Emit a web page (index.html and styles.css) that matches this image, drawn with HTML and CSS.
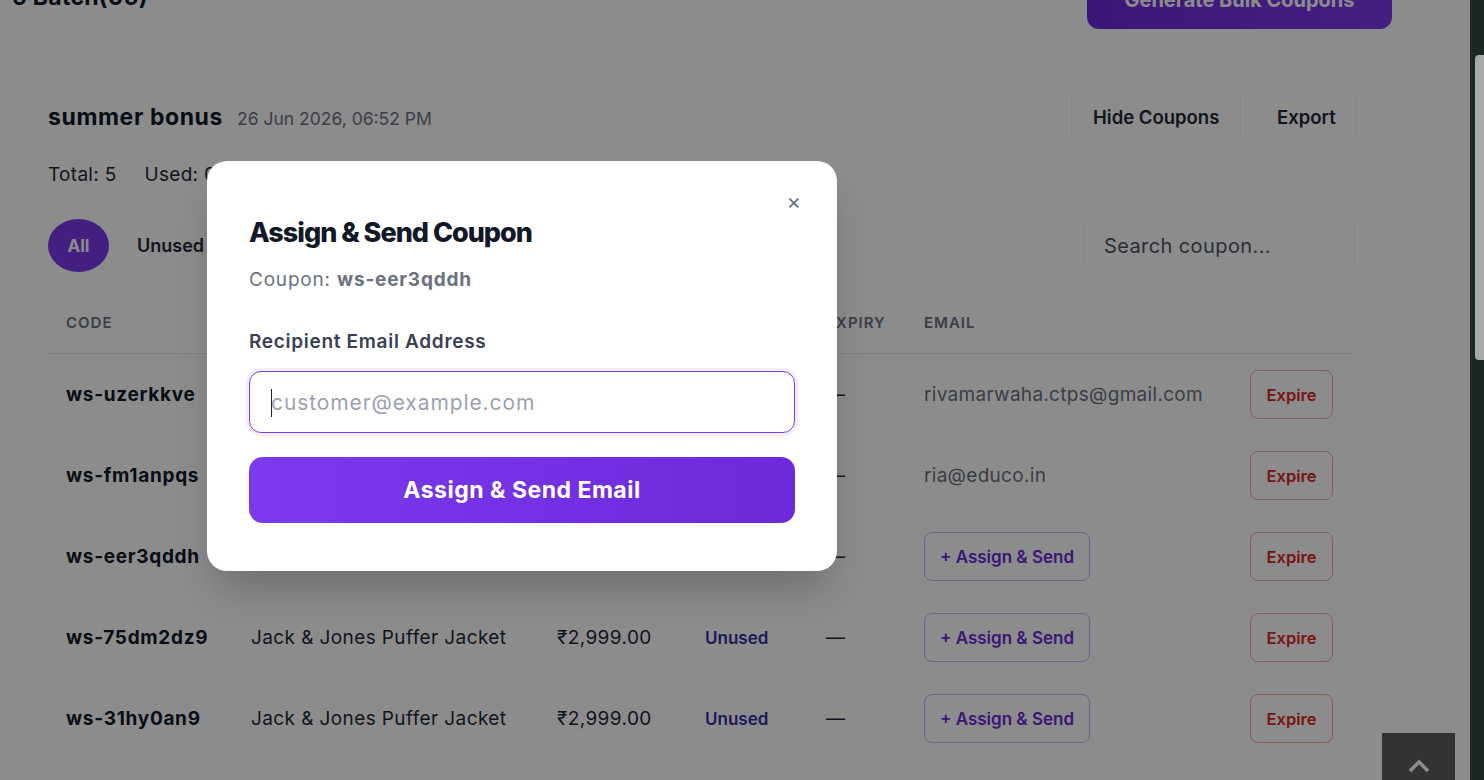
FILE: index.html
```html
<!DOCTYPE html>
<html lang="en">
<head>
  <meta charset="UTF-8">
  <meta name="viewport" content="width=device-width, initial-scale=1.0">
  <title>Coupon Batches</title>
  <link rel="stylesheet" href="styles.css">
</head>
<body>
<div class="page">
  <div class="page-head">
    <h1>5 Batch(05)</h1>
    <button class="btn-generate">Generate Bulk Coupons</button>
  </div>

  <div class="batch">
    <div class="batch-head">
      <div class="batch-title">
        <h2>summer bonus</h2>
        <span class="batch-date">26 Jun 2026, 06:52 PM</span>
      </div>
      <div class="batch-actions">
        <button class="btn-plain btn-hide">Hide Coupons</button>
        <button class="btn-plain btn-export">Export</button>
      </div>
    </div>

    <div class="stats">
      <span>Total: 5</span>
      <span>Used: 0</span>
      <span>Unused: 5</span>
      <span>Expired: 0</span>
    </div>

    <div class="filters">
      <div class="tabs">
        <button class="tab active">All</button>
        <button class="tab">Unused</button>
        <button class="tab">Used</button>
        <button class="tab">Expired</button>
      </div>
      <input class="search" type="text" placeholder="Search coupon...">
    </div>

    <table class="coupons">
      <colgroup>
        <col style="width:185px"><col style="width:306px"><col style="width:148px">
        <col style="width:121px"><col style="width:98px"><col style="width:326px"><col style="width:120px">
      </colgroup>
      <thead>
        <tr>
          <th>Code</th>
          <th>Product</th>
          <th>Value</th>
          <th>Status</th>
          <th>Expiry</th>
          <th>Email</th>
          <th></th>
        </tr>
      </thead>
      <tbody>
        <tr>
          <td class="code">ws-uzerkkve</td>
          <td>Jack &amp; Jones Puffer Jacket</td>
          <td>₹2,999.00</td>
          <td><span class="status">Unused</span></td>
          <td>—</td>
          <td class="email">rivamarwaha.ctps@gmail.com</td>
          <td><button class="btn-expire">Expire</button></td>
        </tr>
        <tr>
          <td class="code">ws-fm1anpqs</td>
          <td>Jack &amp; Jones Puffer Jacket</td>
          <td>₹2,999.00</td>
          <td><span class="status">Unused</span></td>
          <td>—</td>
          <td class="email">ria@educo.in</td>
          <td><button class="btn-expire">Expire</button></td>
        </tr>
        <tr>
          <td class="code">ws-eer3qddh</td>
          <td>Jack &amp; Jones Puffer Jacket</td>
          <td>₹2,999.00</td>
          <td><span class="status">Unused</span></td>
          <td>—</td>
          <td><button class="btn-assign">+ Assign &amp; Send</button></td>
          <td><button class="btn-expire">Expire</button></td>
        </tr>
        <tr>
          <td class="code">ws-75dm2dz9</td>
          <td>Jack &amp; Jones Puffer Jacket</td>
          <td>₹2,999.00</td>
          <td><span class="status">Unused</span></td>
          <td>—</td>
          <td><button class="btn-assign">+ Assign &amp; Send</button></td>
          <td><button class="btn-expire">Expire</button></td>
        </tr>
        <tr>
          <td class="code">ws-31hy0an9</td>
          <td>Jack &amp; Jones Puffer Jacket</td>
          <td>₹2,999.00</td>
          <td><span class="status">Unused</span></td>
          <td>—</td>
          <td><button class="btn-assign">+ Assign &amp; Send</button></td>
          <td><button class="btn-expire">Expire</button></td>
        </tr>
      </tbody>
    </table>
  </div>

  <button class="to-top" aria-label="Back to top">
    <svg width="24" height="14" viewBox="0 0 24 14"><path d="M3 12 L12 3 L21 12" fill="none" stroke="#fff" stroke-width="3.5"/></svg>
  </button>

  <div class="backdrop">
    <div class="modal">
      <button class="modal-close" aria-label="Close">×</button>
      <h3>Assign &amp; Send Coupon</h3>
      <p class="modal-coupon">Coupon: <b>ws-eer3qddh</b></p>
      <label class="modal-label" for="recipient">Recipient Email Address</label>
      <div class="modal-input">
        <span class="caret"></span>
        <input id="recipient" type="email" placeholder="customer@example.com">
      </div>
      <button class="btn-send">Assign &amp; Send Email</button>
    </div>
  </div>
</div>
<div class="scrollbar"><div class="thumb"></div></div>
</body>
</html>
```

FILE: styles.css
```css
body {
  font-family: Inter, "DejaVu Sans", sans-serif;
  margin: 0;
  padding: 0;
  display: flex;
  height: 780px;
  overflow: hidden;
  background: #fff;
  color: #111827;
}
button, input {
  font-family: inherit;
}
.page {
  flex: 1;
  position: relative;
  overflow: hidden;
}
.page-head {
  display: flex;
  justify-content: space-between;
  align-items: center;
  height: 58px;
  margin-top: -29px;
  padding: 0 78px 0 12px;
}
.page-head h1 {
  margin: 0;
  font-size: 23px;
  font-weight: 700;
  letter-spacing: 0.3px;
  position: relative;
  top: -3px;
}
.btn-generate {
  height: 58px;
  width: 305px;
  border: none;
  border-radius: 12px;
  background: linear-gradient(90deg, #6d28d9, #7c3aed);
  color: #fff;
  font-size: 20px;
  font-weight: 700;
}
.batch {
  padding: 66px 114px 0 48px;
}
.batch-head {
  display: flex;
  justify-content: space-between;
  align-items: center;
  height: 44px;
}
.batch-title {
  display: flex;
  align-items: baseline;
  gap: 14px;
}
.batch-title h2 {
  margin: 0;
  font-size: 23px;
  font-weight: 700;
  letter-spacing: 0.6px;
}
.batch-date {
  font-size: 17.5px;
  color: #6b7280;
}
.batch-actions {
  display: flex;
}
.btn-plain {
  height: 42px;
  background: #fff;
  border: none;
  border-left: 1px solid #f0f0f0;
  font-size: 18.5px;
  font-weight: 600;
  color: #1f2937;
  text-align: left;
}
.btn-hide {
  width: 169px;
  padding: 0 0 0 21px;
}
.btn-export {
  width: 116px;
  padding: 0 0 0 36px;
  border-right: 1px solid #f0f0f0;
}
.stats {
  display: flex;
  gap: 28px;
  margin-top: 22px;
  font-size: 19px;
  letter-spacing: 0.3px;
  line-height: 28px;
  color: #1f2937;
}
.filters {
  display: flex;
  justify-content: space-between;
  align-items: center;
  margin-top: 30px;
}
.tabs {
  display: flex;
  align-items: center;
  gap: 8px;
}
.tab {
  height: 53px;
  padding: 0 20px;
  border: none;
  background: #fff;
  font-size: 18px;
  font-weight: 600;
  color: #1f2937;
}
.tab.active {
  width: 61px;
  padding: 0;
  border-radius: 50%;
  background: #7c3aed;
  color: #fff;
  font-size: 17px;
  font-weight: 700;
}
.search {
  width: 271px;
  height: 43px;
  box-sizing: border-box;
  padding: 0 19px;
  border: none;
  border-left: 1px solid #f0f0f0;
  border-right: 1px solid #f0f0f0;
  font-size: 20px;
  letter-spacing: 0.4px;
  color: #374151;
  margin-right: 1px;
}
.search::placeholder {
  color: #4b5563;
}
table.coupons {
  width: 1304px;
  margin-top: 20px;
  border-collapse: collapse;
  table-layout: fixed;
}
.coupons th {
  height: 61px;
  padding: 0 18px;
  text-align: left;
  font-size: 15px;
  font-weight: 600;
  letter-spacing: 1px;
  text-transform: uppercase;
  color: #6b7280;
  border-bottom: 1px solid #e5e7eb;
}
.coupons td {
  height: 81px;
  padding: 0 18px;
  font-size: 19px;
  letter-spacing: 0.4px;
  color: #1f2937;
  white-space: nowrap;
}
.coupons td.code {
  font-weight: 700;
  letter-spacing: 0.7px;
  color: #111827;
}
.coupons td.email {
  color: #6b7280;
  letter-spacing: 0.3px;
}
.status {
  font-size: 17px;
  font-weight: 600;
  letter-spacing: 0;
  color: #3730a3;
}
.btn-assign {
  height: 49px;
  width: 166px;
  border: 1px solid #c4b5fd;
  border-radius: 8px;
  background: #fff;
  color: #6d28d9;
  font-size: 17px;
  font-weight: 600;
}
.btn-expire {
  height: 49px;
  width: 83px;
  border: 1px solid #fca5a5;
  border-radius: 8px;
  background: #fff;
  color: #dc2626;
  font-size: 16.5px;
  font-weight: 600;
}
.to-top {
  position: absolute;
  right: 15px;
  bottom: -20px;
  width: 73px;
  height: 67px;
  border: none;
  background: #5d5d5d;
  display: flex;
  justify-content: center;
  padding-top: 26px;
}
.backdrop {
  position: absolute;
  inset: 0;
  background: rgba(0, 0, 0, 0.45);
}
.modal {
  position: absolute;
  left: 207px;
  top: 161px;
  width: 630px;
  box-sizing: border-box;
  padding: 54px 42px 48px;
  background: #fff;
  border-radius: 20px;
  box-shadow: 0 26px 40px -10px rgba(0, 0, 0, 0.22);
}
.modal-close {
  position: absolute;
  top: 28px;
  right: 36px;
  border: none;
  background: none;
  font-size: 22px;
  line-height: 24px;
  padding: 0;
  color: #6b7280;
}
.modal h3 {
  margin: 0;
  font-size: 27px;
  line-height: 35px;
  font-weight: 800;
  letter-spacing: -1px;
  color: #111827;
}
.modal-coupon {
  margin: 16px 0 0;
  font-size: 19px;
  letter-spacing: 0.8px;
  line-height: 28px;
  color: #6b7280;
}
.modal-coupon b {
  color: #6b7280;
}
.modal-label {
  display: block;
  margin-top: 34px;
  font-size: 19px;
  letter-spacing: 0.7px;
  line-height: 28px;
  font-weight: 600;
  color: #374151;
}
.modal-input {
  position: relative;
  margin-top: 15px;
  height: 62px;
  box-sizing: border-box;
  border: 1px solid #7c3aed;
  border-radius: 12px;
  box-shadow: 0 0 0 3px #f3efff;
  display: flex;
  align-items: center;
}
.modal-input input {
  width: 100%;
  border: none;
  outline: none;
  background: transparent;
  padding: 0 21px;
  font-size: 21px;
  letter-spacing: 0.9px;
  color: #111827;
}
.modal-input input::placeholder {
  color: #9ca3af;
}
.caret {
  position: absolute;
  left: 21px;
  top: 17px;
  width: 1px;
  height: 28px;
  background: #222;
}
.btn-send {
  display: block;
  width: 100%;
  height: 66px;
  margin-top: 24px;
  border: none;
  border-radius: 14px;
  background: linear-gradient(90deg, #7c3aed, #6d28d9);
  color: #fff;
  font-size: 23px;
  font-weight: 700;
  letter-spacing: 0.5px;
}
.scrollbar {
  width: 14px;
  background: #1b2822;
  padding-top: 55px;
  box-sizing: border-box;
}
.thumb {
  margin-left: 5px;
  height: 305px;
  background: #a9a9a9;
  border-radius: 4px 0 0 4px;
}
```
